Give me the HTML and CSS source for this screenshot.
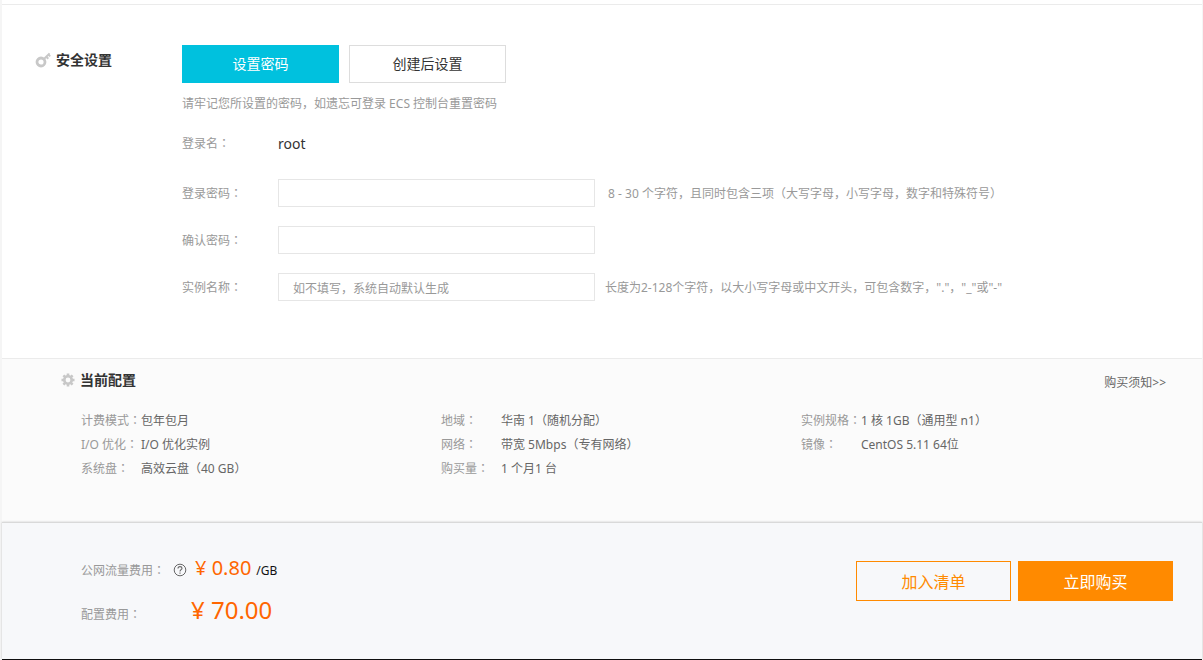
FILE: index.html
```html
<!DOCTYPE html>
<html lang="zh-CN">
<head>
<meta charset="utf-8">
<title>安全设置</title>
<link rel="stylesheet" href="styles.css">
</head>
<body>
<main class="page">
  <section class="security">
    <h2 class="title">
      <svg class="icon-key" viewBox="0 0 16 16" width="16" height="16" aria-hidden="true"><circle cx="6" cy="10" r="4" fill="none" stroke="#c8c8c8" stroke-width="2.8"/><path d="M8.7 7.3 14.6 1.4M11.3 4.7l2 2M13.4 2.6l1.8 1.8" fill="none" stroke="#c8c8c8" stroke-width="2"/></svg>
      安全设置
    </h2>
    <div class="security-body">
      <div class="tabs">
        <button class="tab tab-active" type="button">设置密码</button>
        <button class="tab" type="button">创建后设置</button>
      </div>
      <p class="note">请牢记您所设置的密码，如遗忘可登录 ECS 控制台重置密码</p>
      <div class="row row-name">
        <span class="label">登录名<span class="colon" lang="ja">：</span></span>
        <span class="login">root</span>
      </div>
      <div class="row">
        <label class="label" for="pwd">登录密码<span class="colon" lang="ja">：</span></label>
        <input class="field" id="pwd" type="password">
        <span class="help">&nbsp;8 - 30 个字符，且同时包含三项（大写字母，小写字母，数字和特殊符号）</span>
      </div>
      <div class="row">
        <label class="label" for="pwd2">确认密码<span class="colon" lang="ja">：</span></label>
        <input class="field" id="pwd2" type="password">
      </div>
      <div class="row">
        <label class="label" for="inst">实例名称<span class="colon" lang="ja">：</span></label>
        <input class="field" id="inst" type="text" placeholder="如不填写，系统自动默认生成">
        <span class="help">长度为2-128个字符，以大小写字母或中文开头，可包含数字，"."，"_"或"-"</span>
      </div>
    </div>
  </section>

  <section class="config">
    <div class="config-head">
      <h2 class="title">
        <svg class="icon-gear" viewBox="0 0 14 14" width="14" height="14" aria-hidden="true"><circle cx="7" cy="7" r="3.7" fill="none" stroke="#c8c8c8" stroke-width="2.6"/><path d="M7 .5v2.5M7 11v2.5M.5 7H3M11 7h2.5M2.4 2.4l1.8 1.8M9.8 9.8l1.8 1.8M2.4 11.6l1.8-1.8M9.8 4.2l1.8-1.8" stroke="#c8c8c8" stroke-width="2.6"/></svg>
        当前配置
      </h2>
      <a class="notice" href="#">购买须知&gt;&gt;</a>
    </div>
    <div class="config-grid">
      <dl class="specs">
        <dt>计费模式<span class="colon" lang="ja">：</span></dt><dd>包年包月</dd>
        <dt>I/O 优化<span class="colon" lang="ja">：</span></dt><dd>I/O 优化实例</dd>
        <dt>系统盘<span class="colon" lang="ja">：</span></dt><dd>高效云盘（40 GB）</dd>
      </dl>
      <dl class="specs">
        <dt>地域<span class="colon" lang="ja">：</span></dt><dd>华南 1（随机分配）</dd>
        <dt>网络<span class="colon" lang="ja">：</span></dt><dd>带宽 5Mbps（专有网络）</dd>
        <dt>购买量<span class="colon" lang="ja">：</span></dt><dd>1 个月1 台</dd>
      </dl>
      <dl class="specs">
        <dt>实例规格<span class="colon" lang="ja">：</span></dt><dd>1 核 1GB（通用型 n1）</dd>
        <dt>镜像<span class="colon" lang="ja">：</span></dt><dd>CentOS 5.11 64位</dd>
      </dl>
    </div>
  </section>

  <footer class="checkout">
    <div class="fees">
      <div class="fee">
        <span class="fee-label">公网流量费用<span class="colon" lang="ja">：</span></span>
        <svg class="icon-help" viewBox="0 0 14 14" width="14" height="14" aria-hidden="true"><circle cx="7" cy="7" r="5.8" fill="none" stroke="#666"/><path d="M5 5.6C5 4.3 5.8 3.6 7 3.6s2 .7 2 1.7C9 6.6 7 6.7 7 8.4M7 9.4v1.3" fill="none" stroke="#666" stroke-width="1.1"/></svg>
        <span class="price">¥ 0.80</span>
        <span class="unit">/GB</span>
      </div>
      <div class="fee">
        <span class="fee-label fee-label-wide">配置费用<span class="colon" lang="ja">：</span></span>
        <span class="price price-total">¥ 70.00</span>
      </div>
    </div>
    <div class="actions">
      <button class="action" type="button">加入清单</button>
      <button class="action action-primary" type="button">立即购买</button>
    </div>
  </footer>
</main>
</body>
</html>
```
FILE: styles.css
```css
* {
  box-sizing: border-box;
}

body {
  margin: 0;
  background: #f5f5f5;
  color: #333;
  font: 12px/24px "Noto Sans", "Noto Sans CJK SC", sans-serif;
}

button,
input {
  font-family: inherit;
}

.page {
  display: flex;
  flex-direction: column;
  min-height: 100vh;
  margin: 0 1px 0 2px;
  padding-top: 4px;
  border-bottom: 1px solid #111;
  background: #fff;
}

.title {
  display: flex;
  align-items: center;
  gap: 5px;
  margin: 0;
  font-size: 14px;
  line-height: 24px;
  color: #333;
}

.security {
  display: flex;
  padding: 40px 0 38px 33px;
  border-top: 1px solid #ebebeb;
}

.security .title {
  flex: 0 0 147px;
  align-self: flex-start;
  margin-top: 3px;
}

.security-body {
  flex: 1;
}

.tabs {
  display: flex;
  gap: 10px;
}

.tab {
  width: 157px;
  height: 38px;
  padding: 0 0 2px;
  border: 1px solid #ddd;
  background: #fff;
  color: #333;
  font-size: 14px;
}

.tab-active {
  border-color: #00c1de;
  background: #00c1de;
  color: #fff;
}

.note {
  margin: 9px 0 13px;
  color: #999;
}

.row {
  display: flex;
  align-items: center;
  height: 28px;
  margin-bottom: 19px;
}

.row-name {
  margin-bottom: 22px;
}

.label,
.login,
.help {
  padding-top: 2px;
}

.label {
  flex: 0 0 96px;
  color: #999;
}

.login {
  font-size: 14px;
}

.field {
  width: 317px;
  height: 28px;
  padding: 2px 14px 0;
  border: 1px solid #e6e6e6;
  background: #fff;
  font-size: 12px;
}

.field::placeholder {
  color: #999;
}

.help {
  margin-left: 10px;
  color: #999;
}

.config {
  flex: 1;
  padding: 9px 36px 40px 59px;
  border-top: 1px solid #ebebeb;
  background: #fbfbfb;
}

.config-head {
  display: flex;
  align-items: flex-start;
  justify-content: space-between;
}

.notice {
  margin-top: 3px;
  color: #666;
  text-decoration: none;
}

.config-grid {
  display: grid;
  grid-template-columns: repeat(3, 1fr);
  margin: 14px 5px 0 20px;
}

.specs {
  display: grid;
  grid-template-columns: 60px 1fr;
  grid-auto-rows: 24px;
  align-content: start;
  margin: 0;
}

.specs dt {
  color: #999;
  white-space: nowrap;
}

.specs dd {
  margin: 0;
  color: #666;
}

.checkout {
  display: flex;
  justify-content: space-between;
  padding: 29px 29px 25px 79px;
  border-top: 1px solid #d9d9d9;
  background: #f7f8fa;
  box-shadow: 0 0 2px rgba(0, 0, 0, 0.2);
}

.fees {
  display: flex;
  flex-direction: column;
  gap: 2px;
}

.fee {
  display: flex;
  align-items: baseline;
  height: 40px;
  line-height: 32px;
}

.fee-label {
  flex: 0 0 92px;
  color: #999;
}

.fee-label-wide {
  flex-basis: 110px;
}

.icon-help {
  align-self: flex-start;
  margin: 11px 8px 0 0;
}

.price {
  color: #ff6600;
  font-size: 20px;
}

.price-total {
  font-size: 24px;
}

.unit {
  margin-left: 5px;
  color: #111;
}

.actions {
  display: flex;
  gap: 7px;
  margin-top: 9px;
}

.action {
  width: 155px;
  height: 40px;
  padding: 0 0 1px;
  border: 1px solid #ff8a00;
  background: transparent;
  color: #ff8a00;
  font-size: 16px;
}

.action-primary {
  background: #ff8a00;
  color: #fff;
}
```
